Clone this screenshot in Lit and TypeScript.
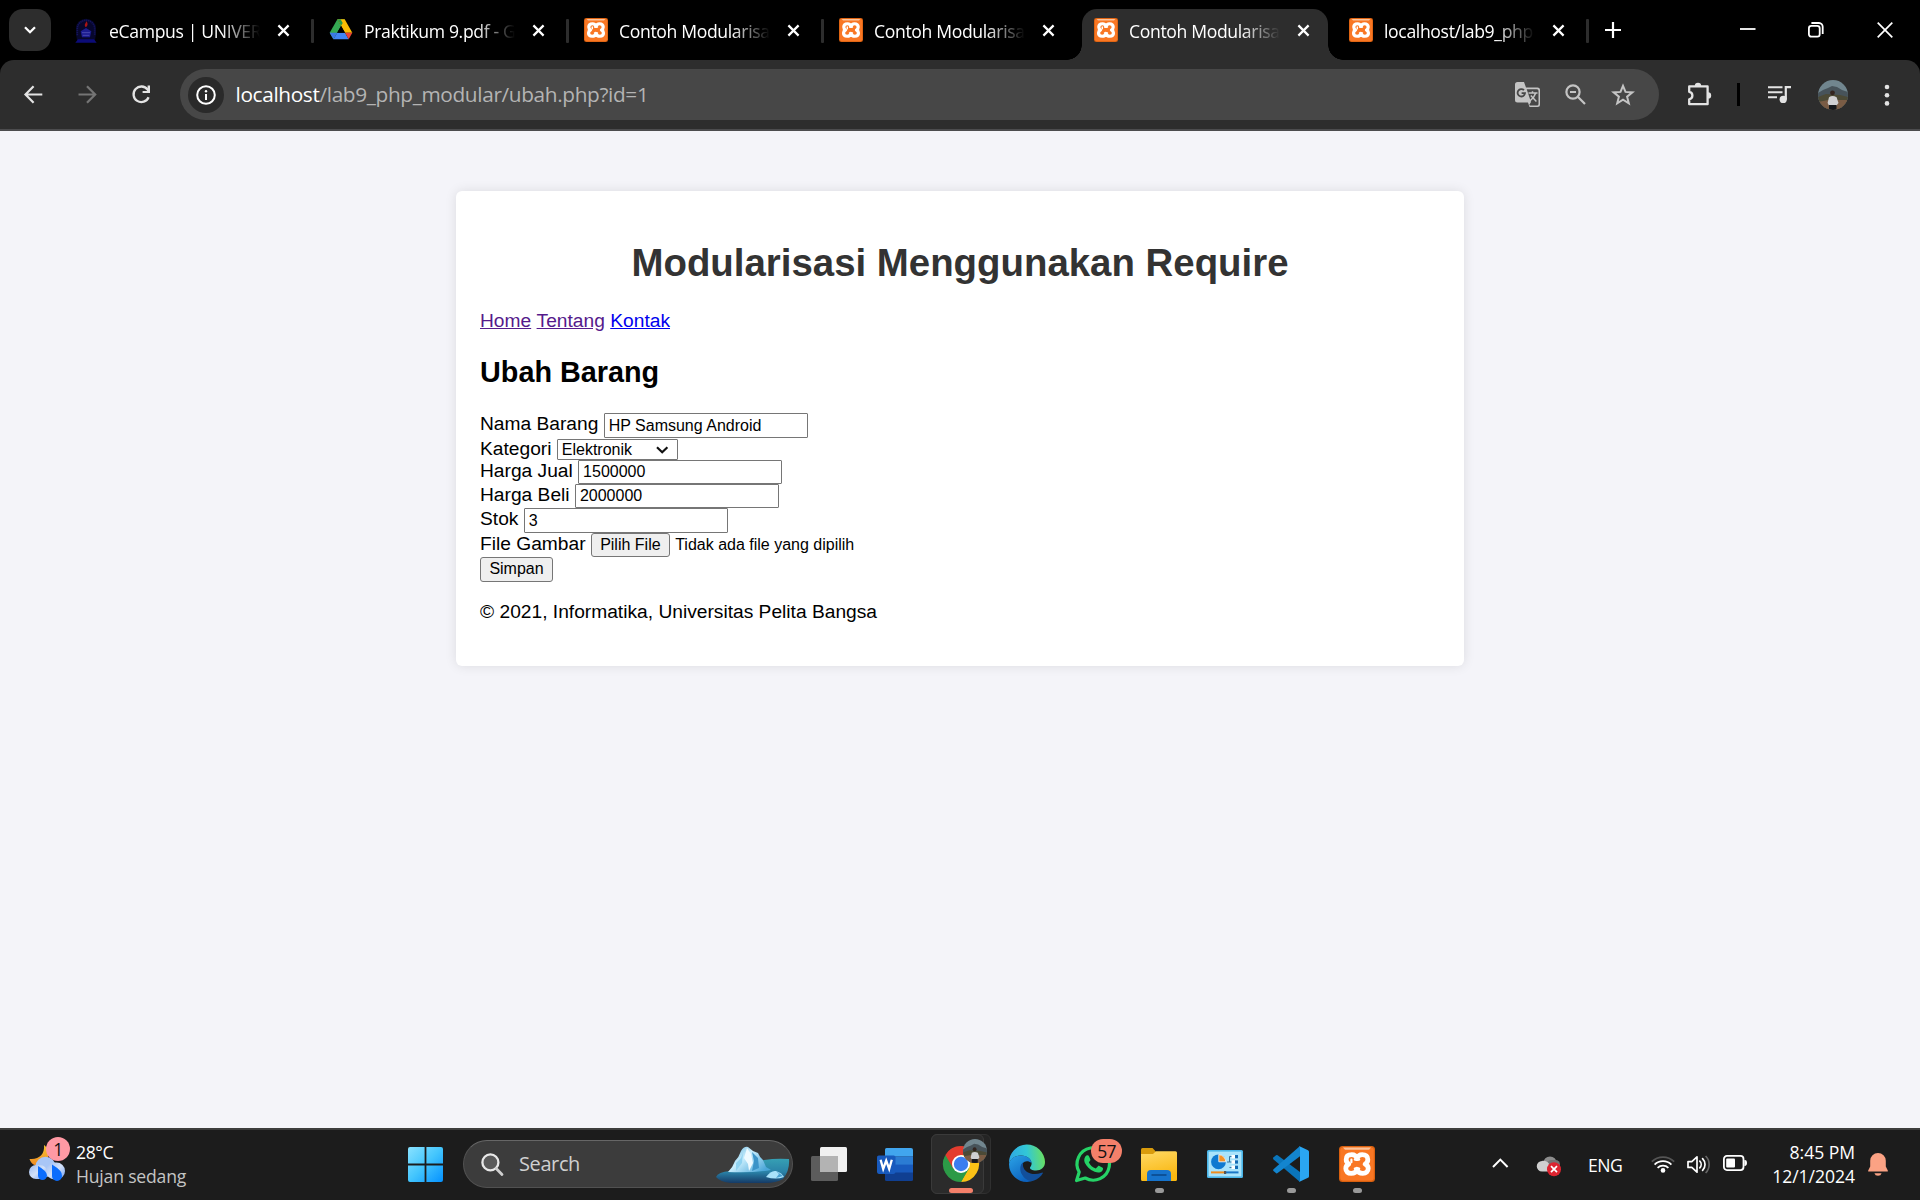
import { LitElement, html, css, svg, nothing } from "lit";
import { customElement, property } from "lit/decorators.js";

/* ---------- icon artwork ---------- */

const xampp = svg`
  <rect x="0" y="0" width="36" height="36" rx="3.5" fill="#d9600f"/>
  <rect x="1.2" y="1.2" width="33.6" height="33.6" rx="3" fill="#f97724"/>
  <path d="M4 1.6H32L30 3.8H6Z" fill="#fbc39b"/>
  <path d="M18 12.6C17 9.4 15.4 8.6 12.8 8.6C9.2 8.6 7.2 10.4 7.2 13.4C7.2 15.6 8.2 17 9.8 18C7.8 19 6.8 20.4 6.8 22.6C6.8 25.6 8.8 27.4 12.2 27.4C15.2 27.4 17 26.4 18 23.2C19 26.4 20.8 27.4 23.8 27.4C27.2 27.4 29.2 25.4 29.2 22.6C29.2 20.4 28.2 19 26.2 18C27.8 17 28.8 15.6 28.8 13.4C28.8 10.4 26.8 8.6 23.2 8.6C20.6 8.6 19 9.4 18 12.6Z" fill="none" stroke="#fff" stroke-width="4.8" stroke-linejoin="round"/>
  <path d="M12.4 16.2V13.6M15.8 13.6H20.2M15.8 22.6H20.2" stroke="#fff" stroke-width="2.2" stroke-linecap="round"/>`;

const drive = svg`
  <path d="M12.6 2L1 22.3L6.6 32L18.2 11.8Z" fill="#34a853"/>
  <path d="M12.6 2H23.6L18.2 11.8Z" fill="#188038"/>
  <path d="M12.6 2H23.6L35 22H24Z" fill="#fbbc04"/>
  <path d="M12.6 2L18.2 11.8L20.6 7.6L17.4 2Z" fill="#2a9a4a"/>
  <path d="M12.3 22H24L29.5 32H6.6Z" fill="#4285f4"/>
  <path d="M1 22H12.3L6.6 32Z" fill="#3b78e7"/>
  <path d="M24 22H35L29.5 32Z" fill="#ea4335"/>
  <path d="M18.1 12L24 22H12.3Z" fill="#000"/>`;

const campus = svg`
  <path d="M3 24V15A15 14 0 0 1 33 15V24L31 36H5Z" fill="#07072c"/>
  <path d="M5 26V16A13 12.5 0 0 1 31 16V26" fill="none" stroke="#14145c" stroke-width="2.4" stroke-dasharray="2 1"/>
  <path d="M2 37L6 32H30L34 37Z" fill="#0c0c78"/>
  <path d="M18 15L26 20L24 29H12L10 20Z" fill="#1c1c90"/>
  <path d="M12 22H24M13 26H23" stroke="#4a4ab0" stroke-width="1.4"/>
  <path d="M19 5C21 9 21 11 18 14C15 12 16 9 19 5Z" fill="#a81414"/>`;

const avatar = svg`
  <defs><clipPath id="round"><circle cx="15" cy="15" r="15"/></clipPath></defs>
  <g clip-path="url(#round)">
    <rect width="30" height="30" fill="#71868f"/>
    <path d="M0 13L5 10L10 8L14 6L19 7L24 10L30 12V20H0Z" fill="#47535a"/>
    <path d="M0 17L8 14L22 15L30 17V30H0Z" fill="#4c4a36"/>
    <path d="M0 22L10 20H30V30H0Z" fill="#7a5c45"/>
    <circle cx="14.5" cy="12.8" r="2.4" fill="#33241f"/>
    <path d="M11 17.2Q14.5 15 18.6 17.2L20.5 23L18.5 25.5H11L9.6 23Z" fill="#d0d0d2"/>
    <path d="M11 25H18.5V30H11Z" fill="#16181c"/>
  </g>`;

const icons: Record<string, unknown> = {
  xampp,
  drive,
  campus,
  avatar,
  down: svg`<path d="M1 1.2L6 6.2L11 1.2" fill="none" stroke="#fff" stroke-width="2.3"/>`,
  x: svg`<path d="M1.4 1.4L11.6 11.6M11.6 1.4L1.4 11.6" stroke="#fff" stroke-width="2.2"/>`,
  plus: svg`<path d="M8 0V16M0 8H16" stroke="#fff" stroke-width="2.2"/>`,
  min: svg`<path d="M0 7H15.5" stroke="#fff" stroke-width="1.8"/>`,
  restore: svg`<rect x=".9" y="3.9" width="10.8" height="10.8" rx="2.4" fill="none" stroke="#fff" stroke-width="1.8"/><path d="M3.4 1H11A3.8 3.8 0 0 1 14.7 4.8V12" fill="none" stroke="#fff" stroke-width="1.8"/>`,
  close: svg`<path d="M.7 .7L15.3 15.3M15.3 .7L.7 15.3" stroke="#fff" stroke-width="1.7"/>`,
  back: svg`<path d="M18.3 9.5H2M9.6 1.2L1.5 9.5L9.6 17.8" fill="none" stroke="#e3e3e3" stroke-width="2.2"/>`,
  forward: svg`<path d="M.5 9.5H17M9 1.2L17.2 9.5L9 17.8" fill="none" stroke="#757575" stroke-width="2.2"/>`,
  reload: svg`<path d="M16.6 12.2A7.8 7.8 0 1 1 15.6 4.6L17 6.6" fill="none" stroke="#e3e3e3" stroke-width="2.3"/><path d="M18 .6V8H10.6V5.9H15.6V.6Z" fill="#e3e3e3"/>`,
  info: svg`<circle cx="10" cy="10" r="8.8" fill="none" stroke="#fff" stroke-width="2"/><path d="M10 9V15" stroke="#fff" stroke-width="2"/><circle cx="10" cy="6.2" r="1.2" fill="#fff"/>`,
  translate: svg`
    <path d="M2.5 0H9L11 5.5H22.5Q25 5.5 25 8V22.5Q25 25 22.5 25H14.5L13 20.5H2.5Q0 20.5 0 18V2.5Q0 0 2.5 0Z" fill="#c4c4c4"/>
    <path d="M11.7 7.2L16 20L14.3 22.8L14.8 23.6H22Q23.5 23.6 23.5 22V8.8Q23.5 7.2 22 7.2Z" fill="#474747"/>
    <path d="M13.5 11H22.5M17.5 9.3V11M20.6 11.2Q19 16 14.8 19M15.8 13.6L21.4 19.4" stroke="#c4c4c4" stroke-width="1.5" fill="none"/>
    <path d="M9 8.2A3.7 3.7 0 1 0 10 11.2H6.6" fill="none" stroke="#474747" stroke-width="1.8"/>`,
  zoomOut: svg`<circle cx="8" cy="8" r="6.6" fill="none" stroke="#c4c4c4" stroke-width="2.2"/><path d="M5 8H11M12.8 12.8L20 20" stroke="#c4c4c4" stroke-width="2.2"/>`,
  star: svg`<path d="M12 2.8L14.5 8.9L21.4 9.4L16.1 13.7L17.8 20.3L12 16.7L6.2 20.3L7.9 13.7L2.6 9.4L9.5 8.9Z" fill="none" stroke="#c4c4c4" stroke-width="2"/>`,
  puzzle: svg`<path d="M2.2 4.4H20.6V22.2H2.2V17.3A3.8 3.8 0 0 0 2.2 9.8Z" fill="none" stroke="#e3e3e3" stroke-width="2.3" stroke-linejoin="round"/><path d="M7.8 4A3.2 3.2 0 0 1 14.2 4ZM21 10.2A3.2 3.2 0 0 1 21 16.6Z" fill="#e3e3e3"/>`,
  media: svg`<path d="M0 1.2H14.5M0 6.2H14.5M0 11.2H9" stroke="#e3e3e3" stroke-width="2.1"/><circle cx="15.2" cy="13.4" r="3.6" fill="#e3e3e3"/><path d="M17.8 13.4V1.2H23" fill="none" stroke="#e3e3e3" stroke-width="2.2"/>`,
  more: svg`<g fill="#e3e3e3"><circle cx="3" cy="3" r="2.3"/><circle cx="3" cy="11.2" r="2.3"/><circle cx="3" cy="19.4" r="2.3"/></g>`,
  weather: svg`
    <defs><linearGradient id="moon" x1="0" y1="0" x2="0" y2="1"><stop offset="0" stop-color="#f5c431"/><stop offset="1" stop-color="#f08a24"/></linearGradient>
    <linearGradient id="cloud" x1="0" y1="0" x2="1" y2="1"><stop offset="0" stop-color="#9dbcf2"/><stop offset=".5" stop-color="#d3e1f8"/><stop offset="1" stop-color="#6f9df0"/></linearGradient></defs>
    <path d="M15 0C16 9 10 15 .5 14C2 19 7 22 12 21C20 19 22 5 15 0Z" fill="url(#moon)"/>
    <circle cx="16.5" cy="22" r="10.2" fill="#a9c6f6"/>
    <rect x="0" y="20" width="18" height="14" rx="7" fill="url(#cloud)"/>
    <rect x="17" y="17.5" width="19" height="17" rx="8.5" fill="url(#cloud)"/>
    <path d="M9 21Q18 26 18 30.5A4.5 4.5 0 0 1 9 30.5ZM23 19.5Q34 26 33 31A5 5 0 0 1 23 31Z" fill="#0c6dfd"/>`,
  windows: svg`
    <defs><linearGradient id="win" gradientUnits="userSpaceOnUse" x1="0" y1="0" x2="35" y2="35"><stop offset="0" stop-color="#8ae2ff"/><stop offset=".5" stop-color="#43c5fd"/><stop offset="1" stop-color="#0491ff"/></linearGradient></defs>
    <path d="M2 0H16.6V16.6H0V2Q0 0 2 0ZM18.4 0H33Q35 0 35 2V16.6H18.4ZM0 18.4H16.6V35H2Q0 35 0 33ZM18.4 18.4H35V33Q35 35 33 35H18.4Z" fill="url(#win)"/>`,
  search: svg`<circle cx="9.4" cy="9.4" r="8" fill="#5a5a5a" stroke="#e8e8e8" stroke-width="2.3"/><path d="M15.2 15.6L21 21.5" stroke="#cfcfcf" stroke-width="2.8" stroke-linecap="round"/>`,
  iceberg: svg`
    <defs><linearGradient id="sea" x1="0" y1="0" x2="0" y2="1"><stop offset="0" stop-color="#36a0b4"/><stop offset=".55" stop-color="#2a82a8"/><stop offset="1" stop-color="#153a66"/></linearGradient>
    <linearGradient id="ice" x1="0" y1="0" x2="1" y2=".7"><stop offset="0" stop-color="#56a8d4"/><stop offset=".45" stop-color="#c9eefd"/><stop offset="1" stop-color="#4aa6d8"/></linearGradient></defs>
    <path d="M48 14Q60 12 73 13Q74 24 67 33Q60 37 50 37H15Q4 36 0 31Q2 26 14 25Z" fill="url(#sea)"/>
    <path d="M12 26Q17 21 19 15Q23 11 25 5Q28 0 32 1L37 5L42 7Q44 12 47 14L50 21L55 24Q38 27 12 26Z" fill="url(#ice)"/>
    <path d="M31 2L28 12L32 18L33 25L37 17L35 8Z" fill="#eefaff"/>
    <path d="M36 6L38 15L36 25L43 22L42 12Z" fill="#3c94c8"/>
    <path d="M20 17L25 12L27 7L26 17L20 25Z" fill="#8fd2f0"/>
    <path d="M50 31Q55 24 60 25Q66 27 68 31Q60 34 50 31Z" fill="#a9e2fa"/>
    <path d="M60 25L63 28L60 32L67 30Z" fill="#4aa2d2"/>`,
  taskview: svg`<rect x="0" y="9" width="27" height="25" rx="1.5" fill="#5c5c5c"/><rect x="9" y="0" width="27" height="25" rx="1.5" fill="#f0f0f0"/><path d="M9 9H27V25H10.5Q9 25 9 23.5Z" fill="#b3b3b3"/>`,
  word: svg`
    <path d="M9.5 0H34Q36 0 36 2V8.5H8V1.5Q8 0 9.5 0Z" fill="#41a5ee"/><path d="M8 8.3H36V17H8Z" fill="#2b7cd3"/><path d="M8 16.6H36V25H8Z" fill="#185abd"/><path d="M8 24.5H36V31.5Q36 33 34.5 33H9.5Q8 33 8 31.5Z" fill="#103f91"/>
    <rect x="0" y="7.4" width="18.5" height="18.5" rx="1.8" fill="#185abd"/>
    <path d="M3.6 11.8L6.2 21L9.2 12.6L12.2 21L14.8 11.8" fill="none" stroke="#fff" stroke-width="2.3"/>`,
  chrome: svg`
    <circle cx="18" cy="18" r="17.5" fill="#2c9a47"/>
    <path d="M18 9H33.6A18 18 0 0 1 18 36L25.8 22.5Z" fill="#fbc116"/>
    <path d="M10.2 22.5L2.4 9A18 18 0 0 0 18 36L25.8 22.5Z" fill="#2c9a47"/>
    <path d="M18 9H33.6A18 18 0 0 0 2.4 9L10.2 22.5Z" fill="#e33b2e"/>
    <circle cx="18" cy="18" r="9" fill="#fff"/><circle cx="18" cy="18" r="7.2" fill="#3b7df0"/>`,
  edge: svg`
    <defs><linearGradient id="eg1" x1="0" y1=".4" x2="1" y2=".3"><stop offset="0" stop-color="#2fa8e4"/><stop offset=".5" stop-color="#32c7d6"/><stop offset="1" stop-color="#6ce15a"/></linearGradient>
    <linearGradient id="eg2" x1="0" y1="0" x2=".6" y2="1"><stop offset="0" stop-color="#2ba3e6"/><stop offset="1" stop-color="#0c62bf"/></linearGradient></defs>
    <path d="M0 17A18 18 0 0 1 36 16C36 21.5 32 24.5 27 24.5C22.5 24.5 20.8 22.8 21 21.6C21.3 20.6 22.6 20 22.6 17.5C22.6 13.5 18.5 9.5 12 9.5C6 9.5 2 12.5 0 17Z" fill="url(#eg1)"/>
    <path d="M0 18C1 12.5 6 9.5 12 9.5C18 9.5 22.4 13 22.6 17C17 12.5 12 17 12 22C12 29 18 34 24 34.6C22 35.6 20 36 18 36A18 18 0 0 1 0 18Z" fill="url(#eg2)"/>
    <path d="M14 16.4C10.8 19 10.4 24 13 28.6C16 34 21 35.6 24.4 34.7C28.6 33.2 32 30.4 33.7 27.4C34 26.8 33.5 26.4 32.8 26.7C24 30 15.5 27 14 20Z" fill="#124f9b"/>`,
  whatsapp: svg`
    <path d="M1.6 34.5L4.2 26A16.2 16.2 0 1 1 10.2 32Z" fill="none" stroke="#25d366" stroke-width="3.2" stroke-linejoin="round"/>
    <path d="M11.4 9.6C12.6 8.8 13.6 9.2 14 10.2L15.3 13.2C15.6 14 15.3 14.5 13.8 16.2C15.4 19.4 17.6 21.3 20.8 22.6L23 20.2C23.4 19.8 23.9 19.8 24.4 20L27.6 21.7C28.4 22.2 28 24.2 27 25.2C25.2 26.8 22.8 27 19.6 25.8C14.6 23.8 11.4 20.2 9.8 16.8C8.6 14.2 9.4 11 11.4 9.6Z" fill="#25d366"/>`,
  folder: svg`
    <defs><linearGradient id="fold" x1="0" y1="0" x2=".3" y2="1"><stop offset="0" stop-color="#ffd965"/><stop offset="1" stop-color="#f9b711"/></linearGradient></defs>
    <path d="M1.5 0H11.5L14.8 3.5V9H0V1.5Q0 0 1.5 0Z" fill="#d99b0c"/>
    <path d="M0 6H12L15 3.2H34.5Q36 3.2 36 4.7V31.5Q36 33 34.5 33H1.5Q0 33 0 31.5Z" fill="url(#fold)"/>
    <path d="M6 33V26Q6 22 10 22H26Q30 22 30 26V33Z" fill="#1673cc"/><path d="M10.5 27H25.5" stroke="#0c4d92" stroke-width="1.8"/>`,
  control: svg`
    <rect width="36" height="28" rx="1.5" fill="#4ab5e8"/><rect x="1.6" y="1.6" width="32.8" height="24.8" fill="#a9e3fb"/>
    <circle cx="11.5" cy="11.8" r="7.4" fill="#0f79d0"/><path d="M11.8 4.6A7.4 7.4 0 0 1 18.8 11.8H11.8Z" fill="#f3932a" stroke="#fff" stroke-width=".8"/>
    <path d="M20 12H22.5V6.5H25M22.5 12H25M22.5 17.5H25" fill="none" stroke="#38759f" stroke-width="1"/>
    <g fill="#fff"><rect x="24.5" y="5" width="6.5" height="3.4"/><rect x="24.5" y="10.3" width="6.5" height="3.4"/><rect x="24.5" y="15.6" width="6.5" height="3.4"/></g>
    <g fill="#146bb4"><rect x="28" y="5" width="3" height="3.4"/><rect x="28" y="10.3" width="3" height="3.4"/><rect x="28" y="15.6" width="3" height="3.4"/></g>
    <path d="M4 22.4H18" stroke="#f08c1c" stroke-width="2"/><path d="M18 22.4H31.5" stroke="#1976c6" stroke-width="2"/><rect x="17" y="21" width="2.2" height="3" fill="#555"/>`,
  vscode: svg`
    <path d="M0 11.8L3 9.2Q3.8 8.6 4.6 9.2L27 26V36L0.6 13.4Q-.2 12.6 0 11.8Z" fill="#0a75bb"/>
    <path d="M.4 23.4Q-.2 24.4 .5 25L3.2 27.2Q3.9 27.6 4.6 27.1L27 10.2V0L.8 23Z" fill="#1385cf"/>
    <path d="M26 0L35 4.2Q36 4.7 36 5.8V30.2Q36 31.3 35 31.8L26 36Q27 35.5 27 34V2Q27 .6 26 0Z" fill="#2aa6f2"/>`,
  up: svg`<path d="M1 9L8.3 1.6L15.6 9" fill="none" stroke="#fff" stroke-width="2"/>`,
  cloudOff: svg`
    <circle cx="13" cy="7" r="6.6" fill="#8d8d8d"/><rect x="10" y="4" width="13" height="9" rx="4.5" fill="#747474"/><path d="M5 15.5A5.2 5.2 0 0 1 5 5C10 4 14 8 14 15.5Z" fill="#cfcfcf"/>
    <circle cx="17" cy="13.2" r="7" fill="#dc2430"/><path d="M14 10.2L20 16.2M20 10.2L14 16.2" stroke="#fff" stroke-width="1.7"/>`,
  wifi: svg`
    <path d="M.8 6.6A16 16 0 0 1 23.2 6.6" fill="none" stroke="#555" stroke-width="1.7"/>
    <path d="M3.6 9.6A11.9 11.9 0 0 1 20.4 9.6M6.6 12.8A7.7 7.7 0 0 1 17.4 12.8" fill="none" stroke="#fff" stroke-width="1.8"/><circle cx="12" cy="15.4" r="2.3" fill="#fff"/>`,
  volume: svg`
    <path d="M1 6.6H4.8L10 1.8V17.2L4.8 12.4H1Z" fill="none" stroke="#fff" stroke-width="1.7" stroke-linejoin="round"/>
    <path d="M12.8 6.2A4.7 4.7 0 0 1 12.8 12.8M15.6 3.6A8.4 8.4 0 0 1 15.6 15.4" fill="none" stroke="#fff" stroke-width="1.7" stroke-linecap="round"/>
    <path d="M18.6 1A12 12 0 0 1 18.6 18" fill="none" stroke="#666" stroke-width="1.7"/>`,
  battery: svg`<rect x=".9" y=".9" width="19.6" height="14.2" rx="3" fill="none" stroke="#fff" stroke-width="1.8"/><rect x="3.2" y="3.4" width="8.8" height="9.2" rx="1" fill="#fff"/><path d="M21.4 5H22.2Q24 5.2 24 8T22.2 11H21.4Z" fill="#fff"/>`,
  bell: svg`<path d="M10 0A7.8 7.8 0 0 0 2.2 7.8V13.4L.2 17.4Q-.2 18.6 1 18.6H19Q20.2 18.6 19.8 17.4L17.8 13.4V7.8A7.8 7.8 0 0 0 10 0Z" fill="#fba284"/><path d="M6.4 20.2H13.6A3.7 3.4 0 0 1 6.4 20.2Z" fill="#fba284"/>`,
  caret: svg`<path d="M1 1.3L6.2 6.2L11.4 1.3" fill="none" stroke="#111" stroke-width="2.2"/>`,
};

function icon(name: string, w: number, h: number, box = `0 0 ${w} ${h}`) {
  return html`<svg width=${w} height=${h} viewBox=${box}>${icons[name]}</svg>`;
}

const base = css`
  :host, * { box-sizing: border-box; }
  svg { display: block; flex: none; overflow: visible; }
`;

/* ---------- browser chrome ---------- */

interface Tab { icon: string; title: string; active?: boolean; sep?: boolean; }

const tabs: Tab[] = [
  { icon: "campus", title: "eCampus | UNIVER", sep: true },
  { icon: "drive", title: "Praktikum 9.pdf - G", sep: true },
  { icon: "xampp", title: "Contoh Modularisa", sep: true },
  { icon: "xampp", title: "Contoh Modularisa" },
  { icon: "xampp", title: "Contoh Modularisa", active: true },
  { icon: "xampp", title: "localhost/lab9_php", sep: true },
];

@customElement("browser-bar")
class BrowserBar extends LitElement {
  static styles = [base, css`
    :host { display: block; background: #000; color: #fff; font-family: "Open Sans", "Noto Sans", sans-serif; }
    .strip { display: flex; height: 60px; }
    .menu { width: 42px; height: 42px; margin: 9px 8px 0 9px; border-radius: 14px; background: #2d2d2d; display: flex; align-items: center; justify-content: center; padding-bottom: 1px; }
    .tab { position: relative; width: 255px; height: 60px; display: flex; align-items: center; padding: 0 0 0 15px; flex: none; }
    .tab > * { position: relative; }
    .tab.active::before { content: ""; position: absolute; left: 3px; right: 6px; top: 9px; bottom: 0; background: #2d2d2d; border-radius: 15px 15px 0 0; }
    .tab.active::after { content: ""; position: absolute; left: -12px; right: -9px; bottom: 0; height: 15px;
      background: radial-gradient(circle at 0 0, transparent 14.5px, #2d2d2d 15px) left / 15px 15px no-repeat,
        radial-gradient(circle at 100% 0, transparent 14.5px, #2d2d2d 15px) right / 15px 15px no-repeat; }
    .title { width: 156px; margin: 1px 12px 0 11px; white-space: nowrap; font-size: 17.6px; line-height: 26px; letter-spacing: -0.35px;
      -webkit-mask-image: linear-gradient(90deg, #000 112px, transparent 151px); mask-image: linear-gradient(90deg, #000 112px, transparent 151px); }
    .tab:first-of-type .title { letter-spacing: -0.5px; }
    .sep { width: 3px; height: 24px; background: #2d2d2d; margin: 2px 0 0 auto; border-radius: 1px; }
    .plus { margin: 22px 0 0 16px; }
    .win { display: flex; margin-left: auto; gap: 53px; padding: 22px 27px 0 0; }
    .win svg:first-child { margin-right: -1px; }
    .tools { display: flex; align-items: center; height: 71px; background: #2d2d2d; border-radius: 14px 14px 0 0; border-bottom: 2px solid #4c4c4e; padding: 0 30px 0 24px; }
    .nav { display: flex; gap: 35px; width: 156px; }
    .omni { display: flex; align-items: center; width: 1479px; height: 51px; border-radius: 26px; background: #474747; padding: 0 24px 0 7.5px; }
    .site { width: 36px; height: 36px; border-radius: 50%; background: #2a2a2a; display: flex; align-items: center; justify-content: center; }
    .url { margin: -2px 0 0 12px; font-size: 20.8px; letter-spacing: -0.35px; color: #b4b4b4; }
    .host { color: #fff; }
    .acts { display: flex; align-items: center; margin-left: auto; gap: 25px; }
    .puzzle { margin: -2px 0 0 28px; }
    .bar { width: 3px; height: 23px; background: #000; margin: 0 28px 0 25px; }
    .face { margin-left: 27px; }
    .more { margin-left: auto; }
  `];
  render() {
    return html`
      <div class="strip">
        <div class="menu">${icon("down", 12, 8)}</div>
        ${tabs.map((t) => html`<div class="tab ${t.active ? "active" : ""}">
          ${icon(t.icon, 24, 24, "0 0 36 36")}
          <div class="title">${t.title}</div>
          ${icon("x", 13, 13)}
          ${t.sep ? html`<div class="sep"></div>` : nothing}
        </div>`)}
        <div class="plus">${icon("plus", 16, 16)}</div>
        <div class="win">${icon("min", 16, 16)}${icon("restore", 16, 16)}${icon("close", 16, 16)}</div>
      </div>
      <div class="tools">
        <div class="nav">${icon("back", 19, 19)}${icon("forward", 19, 19)}${icon("reload", 19, 19)}</div>
        <div class="omni">
          <div class="site">${icon("info", 20, 20)}</div>
          <div class="url"><span class="host">localhost</span>/lab9_php_modular/ubah.php?id=1</div>
          <div class="acts">${icon("translate", 25, 25)}${icon("zoomOut", 21, 21)}${icon("star", 24, 23)}</div>
        </div>
        <div class="puzzle">${icon("puzzle", 25, 24)}</div>
        <div class="bar"></div>
        ${icon("media", 23, 17)}
        <div class="face">${icon("avatar", 30, 30)}</div>
        <div class="more">${icon("more", 6, 22)}</div>
      </div>`;
  }
}

/* ---------- page form ---------- */

@customElement("item-form")
class ItemForm extends LitElement {
  static styles = [base, css`
    :host { display: block; width: 1008px; height: 475px; background: #fff; border-radius: 6px; box-shadow: 0 0 12px rgba(0, 0, 0, 0.1); padding: 50px 24px 0;
      font-family: "Liberation Sans", Arial, sans-serif; font-size: 19.2px; line-height: 22px; color: #000; }
    h1 { margin: 0; text-align: center; font-size: 38.4px; line-height: 44px; color: #333; }
    nav { margin-top: 25px; display: flex; gap: 5.4px; }
    a { color: #0000ee; text-decoration: underline; }
    a.seen { color: #551a8b; }
    h2 { margin: 23px 0 0; font-size: 28.8px; line-height: 34px; }
    form { display: flex; flex-direction: column; margin-top: 24px; }
    .row { display: flex; align-items: flex-start; gap: 5.3px; height: 24px; }
    .row.name { height: 26px; }
    .row.cat { height: 21px; }
    .row.cat label { margin-top: -1px; }
    .row.stock { height: 25px; }
    .field { width: 204px; height: 24px; border: 1px solid #767676; border-radius: 1px; padding: 0 4px; background: #fff; color: #000; font: 16px/21px "Liberation Sans", Arial, sans-serif; }
    .field.tall { height: 25px; line-height: 23px; }
    .select { width: 121px; height: 21px; border: 1px solid #767676; border-radius: 1px; display: flex; align-items: center; justify-content: space-between; font-size: 16px; line-height: 19px; padding: 0 8px 0 4px; }
    .btn { height: 24px; border: 1px solid #767676; border-radius: 3px; background: #efefef; padding: 0; width: 79px; color: #000; font: 16px/21px "Liberation Sans", Arial, sans-serif; text-align: center; }
    .btn.save { width: 73px; height: 25px; line-height: 22px; }
    .none { font-size: 16px; line-height: 24px; }
    footer { margin-top: 20px; }
  `];
  render() {
    return html`
      <h1>Modularisasi Menggunakan Require</h1>
      <nav><a class="seen">Home</a><a class="seen">Tentang</a><a>Kontak</a></nav>
      <h2>Ubah Barang</h2>
      <form>
        <div class="row name"><label>Nama Barang</label><div class="field tall">HP Samsung Android</div></div>
        <div class="row cat"><label>Kategori</label><div class="select"><span>Elektronik</span>${icon("caret", 12.4, 7.5)}</div></div>
        <div class="row"><label>Harga Jual</label><div class="field">1500000</div></div>
        <div class="row"><label>Harga Beli</label><div class="field">2000000</div></div>
        <div class="row stock"><label>Stok</label><div class="field tall">3</div></div>
        <div class="row"><label>File Gambar</label><div class="btn">Pilih File</div><span class="none">Tidak ada file yang dipilih</span></div>
        <div class="row"><div class="btn save">Simpan</div></div>
      </form>
      <footer>© 2021, Informatika, Universitas Pelita Bangsa</footer>`;
  }
}

/* ---------- taskbar ---------- */

@customElement("task-app")
class TaskApp extends LitElement {
  @property() name = "";
  @property({ type: Number }) h = 36;
  @property({ type: Boolean }) running = false;
  @property() badge = "";
  static styles = [base, css`
    :host { position: relative; display: flex; width: 66px; height: 70px; align-items: center; justify-content: center; padding-bottom: 2px; }
    .dot { position: absolute; left: 28.5px; top: 58px; width: 9px; height: 5px; border-radius: 2.5px; background: #999; }
    .badge { position: absolute; left: 31px; top: 9px; width: 31px; height: 24px; border-radius: 12px; background: #f4806a; color: #111; font: 17.5px/24px "Open Sans", sans-serif; letter-spacing: -0.8px; text-align: center; }
  `];
  render() {
    return html`${icon(this.name, 36, this.h)}
      ${this.running ? html`<div class="dot"></div>` : nothing}
      ${this.badge ? html`<div class="badge">${this.badge}</div>` : nothing}`;
  }
}

@customElement("task-bar")
class TaskBar extends LitElement {
  static styles = [base, css`
    :host { display: flex; flex: none; height: 72px; background: #1c1c1c; border-top: 2px solid #3d3d3d; color: #fff; font-family: "Open Sans", "Noto Sans", sans-serif; font-size: 17.6px; line-height: 24px; letter-spacing: -0.4px; }
    .weather { display: flex; position: relative; width: 408px; padding: 10px 0 0 29px; }
    .weather > svg { margin: 5px 11px 0 0; }
    .count { position: absolute; left: 46px; top: 7px; width: 24px; height: 24px; border-radius: 50%; background: #ff99a4; color: #111; text-align: center; line-height: 24px; }
    .sub { color: #c4c4c4; letter-spacing: -0.2px; }
    .start { margin-top: 17px; }
    .search { display: flex; align-items: center; width: 330px; height: 48px; margin: 10px 0 0 20px; border: 1.5px solid #515151; border-top-color: #666; border-radius: 24px; background: #3c3c3c; padding: 0 3px 0 17px; font-size: 20px; letter-spacing: -0.4px; color: #d0d0d0; }
    .search span { margin: 0 auto 0 16px; }
    .tv { margin: 17px 0 0 18px; }
    .word { margin: 18px 0 0 30px; }
    .chrome { position: relative; width: 60px; height: 60px; margin: 4px 0 0 18px; padding: 12px; border-radius: 6px; background: #242424; border: 1px solid #303030; }
    .front { position: absolute; left: -1px; top: -1px; width: 53px; height: 60px; border-radius: 6px; background: #2b2b2b; border: 1px solid #3a3a3a; }
    .chrome > svg { position: relative; margin: -1px 0 0 -1px; }
    .face { position: absolute; left: 31px; top: 4px; }
    .line { position: absolute; left: 17px; top: 53px; width: 24px; height: 5px; border-radius: 2.5px; background: #f4806a; }
    .apps { display: flex; margin-left: 3px; }
    .tray { display: flex; margin-left: auto; padding-right: 32px; }
    .up { margin: 28px 28px 0 0; }
    .cloud { margin: 26px 27px 0 0; }
    .lang { margin: 23px 28px 0 0; width: 35px; letter-spacing: -0.5px; }
    .sys { display: flex; gap: 12px; padding-top: 25px; }
    .time { width: 108px; padding-top: 10px; text-align: right; letter-spacing: -0.05px; }
    .bell { margin: 23px 0 0 13px; }
  `];
  render() {
    return html`
      <div class="weather">${icon("weather", 36, 35)}
        <div><div>28°C</div><div class="sub">Hujan sedang</div></div>
        <div class="count">1</div>
      </div>
      <div class="start">${icon("windows", 35, 35)}</div>
      <div class="search">${icon("search", 22, 22)}<span>Search</span>${icon("iceberg", 73, 37)}</div>
      <div class="tv">${icon("taskview", 36, 34)}</div>
      <div class="word">${icon("word", 36, 33)}</div>
      <div class="chrome"><div class="front"></div>${icon("chrome", 36, 36)}
        <div class="face">${icon("avatar", 24, 24, "0 0 30 30")}</div><div class="line"></div></div>
      <div class="apps">
        <task-app name="edge"></task-app>
        <task-app name="whatsapp" badge="57"></task-app>
        <task-app name="folder" .h=${33} running></task-app>
        <task-app name="control" .h=${28}></task-app>
        <task-app name="vscode" running></task-app>
        <task-app name="xampp" running></task-app>
      </div>
      <div class="tray">
        <div class="up">${icon("up", 17, 10)}</div>
        <div class="cloud">${icon("cloudOff", 24, 20)}</div>
        <div class="lang">ENG</div>
        <div class="sys">${icon("wifi", 24, 18)}${icon("volume", 24, 19)}${icon("battery", 24, 16)}</div>
        <div class="time"><div>8:45 PM</div><div>12/1/2024</div></div>
        <div class="bell">${icon("bell", 20, 24)}</div>
      </div>`;
  }
}

@customElement("app-root")
class AppRoot extends LitElement {
  static styles = css`
    :host { display: flex; flex-direction: column; width: 1920px; height: 1200px; overflow: hidden; background: #f4f4f9; }
    main { flex: 1; display: flex; justify-content: center; align-items: flex-start; padding-top: 60px; box-sizing: border-box; }
  `;
  render() {
    return html`<browser-bar></browser-bar><main><item-form></item-form></main><task-bar></task-bar>`;
  }
}
